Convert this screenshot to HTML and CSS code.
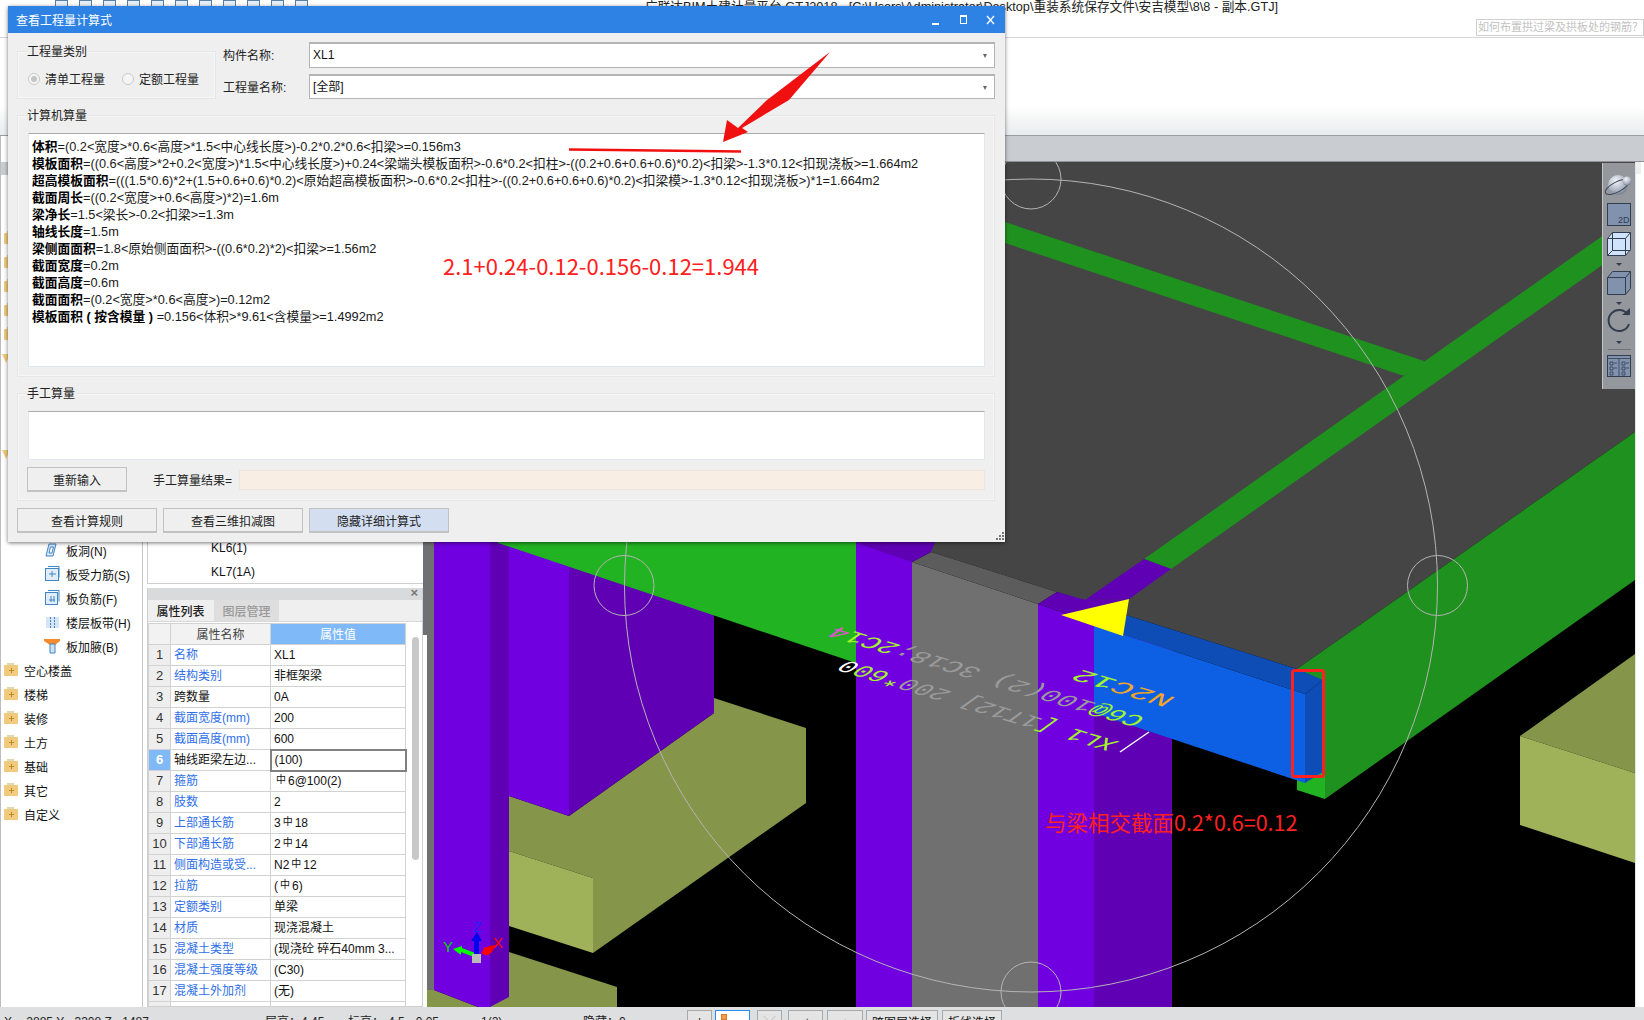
FILE: index.html
```html
<!DOCTYPE html>
<html lang="zh">
<head>
<meta charset="utf-8">
<title>查看工程量计算式</title>
<link rel="stylesheet" href="styles.css">
</head>
<body>
<header class="topbar">
  <div class="quick">
    <i class="qi"></i><i class="qi"></i><i class="qi"></i><i class="qi"></i><i class="qi"></i><i class="qi"></i><i class="qi"></i><i class="qi"></i><i class="qi"></i><i class="qi"></i><i class="qi"></i>
  </div>
  <div class="apptitle">广联达BIM土建计量平台 GTJ2018 - [C:\Users\Administrator\Desktop\重装系统保存文件\安吉模型\8\8 - 副本.GTJ]</div>
  <div class="search">如何布置拱过梁及拱板处的钢筋？</div>
</header>
<div class="ribbon"></div>
<div class="main">
  <div class="leftcol">
    <nav class="tree">
      <div class="treehead"><div class="th1"></div><div class="th2"></div></div>
      <div class="row folder"><i class="fd"></i></div>
      <div class="row folder"><i class="fd"></i></div>
      <div class="row folder"><i class="fd"></i></div>
      <div class="row folder"><i class="fd"></i></div>
      <div class="row folder"><i class="fd"></i></div>
      <div class="row folder"><i class="tri"></i></div>
      <div class="row"></div>
      <div class="row"></div>
      <div class="row"></div>
      <div class="row folder"><i class="tri"></i></div>
      <div class="row"></div>
      <div class="row"></div>
      <div class="row"></div>
      <div class="row leaf"><svg class="ic" viewBox="0 0 16 16"><path d="M5 2h7L9 14H2z" fill="#d8e6f5" stroke="#3f86c9"/><path d="M6.500 5h3L8 11H5z" fill="#fff" stroke="#3f86c9"/></svg>板洞(N)</div>
      <div class="row leaf"><svg class="ic" viewBox="0 0 16 16"><rect x="1.500" y="2.500" width="13" height="12" fill="#e2edf8" stroke="#3f86c9"/><path d="M4 0.500h11v11M5 8h7M8 5v6" fill="none" stroke="#3f86c9"/></svg>板受力筋(S)</div>
      <div class="row leaf"><svg class="ic" viewBox="0 0 16 16"><rect x="1.500" y="2.500" width="12" height="12" fill="#e2edf8" stroke="#3f86c9"/><path d="M4 0.500h11v11M5 10h6M7 6v6M10 6v6" fill="none" stroke="#3f86c9"/></svg>板负筋(F)</div>
      <div class="row leaf"><svg class="ic" viewBox="0 0 16 16"><rect x="2" y="3" width="13" height="11" fill="#d5e5f6"/><path d="M6.500 3v11M10.500 3v11" stroke="#3f86c9" stroke-dasharray="2 1"/></svg>楼层板带(H)</div>
      <div class="row leaf"><svg class="ic" viewBox="0 0 16 16"><path d="M0 1h16v2L11 7v8H6V7L0 3z" fill="#f58b2c"/><path d="M6 6h5v9H6z" fill="#cfe0f2" stroke="#3f86c9"/></svg>板加腋(B)</div>
      <div class="row folder"><i class="fd"></i>空心楼盖</div>
      <div class="row folder"><i class="fd"></i>楼梯</div>
      <div class="row folder"><i class="fd"></i>装修</div>
      <div class="row folder"><i class="fd"></i>土方</div>
      <div class="row folder"><i class="fd"></i>基础</div>
      <div class="row folder"><i class="fd"></i>其它</div>
      <div class="row folder"><i class="fd"></i>自定义</div>
    </nav>
    <div class="midcol">
      <div class="list">
        <div class="listrow">KL6(1)</div>
        <div class="listrow">KL7(1A)</div>
      </div>
      <div class="props">
        <div class="propshead"><span class="closex">×</span></div>
        <div class="tabs"><div class="tab on">属性列表</div><div class="tab">图层管理</div></div>
        <div class="tablewrap">
          <table class="ptable">
            <colgroup><col class="c1"><col class="c2"><col class="c3"></colgroup>
            <tr class="hd"><th></th><th>属性名称</th><th class="val">属性值</th></tr>
            <tr><td class="n">1</td><td class="b">名称</td><td>XL1</td></tr>
            <tr><td class="n">2</td><td class="b">结构类别</td><td>非框架梁</td></tr>
            <tr><td class="n">3</td><td>跨数量</td><td>0A</td></tr>
            <tr><td class="n">4</td><td class="b">截面宽度(mm)</td><td>200</td></tr>
            <tr><td class="n">5</td><td class="b">截面高度(mm)</td><td>600</td></tr>
            <tr><td class="n act">6</td><td>轴线距梁左边...</td><td class="edit">(100)</td></tr>
            <tr><td class="n">7</td><td class="b">箍筋</td><td><span class="rb">中</span>6@100(2)</td></tr>
            <tr><td class="n">8</td><td class="b">肢数</td><td>2</td></tr>
            <tr><td class="n">9</td><td class="b">上部通长筋</td><td>3<span class="rb">中</span>18</td></tr>
            <tr><td class="n">10</td><td class="b">下部通长筋</td><td>2<span class="rb">中</span>14</td></tr>
            <tr><td class="n">11</td><td class="b">侧面构造或受...</td><td>N2<span class="rb">中</span>12</td></tr>
            <tr><td class="n">12</td><td class="b">拉筋</td><td>(<span class="rb">中</span>6)</td></tr>
            <tr><td class="n">13</td><td class="b">定额类别</td><td>单梁</td></tr>
            <tr><td class="n">14</td><td class="b">材质</td><td>现浇混凝土</td></tr>
            <tr><td class="n">15</td><td class="b">混凝土类型</td><td>(现浇砼 碎石40mm 3...</td></tr>
            <tr><td class="n">16</td><td class="b">混凝土强度等级</td><td>(C30)</td></tr>
            <tr><td class="n">17</td><td class="b">混凝土外加剂</td><td>(无)</td></tr>
            <tr><td class="n"></td><td></td><td></td></tr>
          </table>
          <div class="vscroll"></div>
        </div>
      </div>
    </div>
    <div class="splitter"></div>
  </div>
  <div class="rightcol">
    <div class="tabstrip"></div>
    <div class="canvasrow">
      <div class="viewport">
        <svg class="scene" width="1208" height="845" viewBox="427 162 1208 845">
          <rect x="427" y="162" width="1208" height="845" fill="#000"/>
          <polygon points="427,162 1635,162 1635,432 1297,669 1126,615 1057,592 931,552 855,530 427,530" fill="#454545"/>
          <polygon points="1005,222 1424,361 1419,378 1401,375 1005,243" fill="#1f911f"/>
          <polygon points="1144,559 1171,569 1635,242 1635,213" fill="#1f911f"/>
          <polygon points="1297,669 1635,432 1635,580 1325,799 1325,682" fill="#1f911f"/>
          <polygon points="1297,770 1325,770 1325,799 1297,790" fill="#22b322"/>
          <polygon points="1520,736 1635,654 1635,773" fill="#85964a"/>
          <polygon points="1520,736 1635,773 1635,863 1520,825" fill="#9fb25a"/>
          <polygon points="509,952 617,987 617,1007 490,1007" fill="#85964a"/>
          <polygon points="427,990 434,990 478,1007 427,1007" fill="#85964a"/>
          <polygon points="509,796 509,851 593,878 593,953 806,803 806,728 714,698 714,713 569,816" fill="#85964a"/>
          <polygon points="509,851 593,878 593,953 509,926" fill="#9fb25a"/>
          <rect x="427" y="500" width="7" height="490" fill="#707070"/>
          <polygon points="434,500 490,500 490,1007 478,1007 434,990" fill="#7000e0"/>
          <polygon points="490,500 509,500 509,997 490,1007" fill="#5f00b5"/>
          <polygon points="509,500 569,500 569,816 509,796" fill="#7000e0"/>
          <polygon points="569,500 714,500 714,713 569,816" fill="#5f00b5"/>
          <polygon points="498,543 856,543 856,663" fill="#22b322"/>
          <polygon points="498,530 856,530 856,543 498,543" fill="#22b322"/>
          <rect x="856" y="543" width="56" height="464" fill="#7000e0"/>
          <polygon points="912,562 1038,604 1038,1007 912,1007" fill="#707070"/>
          <polygon points="912,562 931,552 1057,592 1038,604" fill="#5c5c5c"/>
          <polygon points="856,530 940,530 931,552 912,562 856,543" fill="#5f00b5"/>
          <polygon points="1038,604 1094,623 1094,1007 1038,1007" fill="#7000e0"/>
          <polygon points="1094,623 1172,640 1172,1007 1094,1007" fill="#5f00b5"/>
          <polygon points="1144,559 1171,569 1129,599 1085,600" fill="#5f00b5"/>
          <polygon points="1038,604 1057,592 1086,600 1129,599 1094,623" fill="#5f00b5"/>
          <polygon points="1094,625 1305,694 1305,783 1094,713" fill="#0d60e4"/>
          <polygon points="1126,615 1297,669 1323,680 1305,694 1100,627" fill="#0e4db5"/>
          <polygon points="1305,694 1323,680 1323,772 1305,783" fill="#0e4db5"/>
          <polygon points="1061,615 1129,599 1123,636" fill="#ff0"/>
          <text class="bmt" transform="matrix(-1.58 -0.474 1.2 -0.87 1120 742)"><tspan fill="#a4f52c">XL1 [</tspan><tspan fill="#9a9a9a">1T12] 200</tspan><tspan fill="#a4f52c">*60</tspan><tspan fill="#fff">0</tspan></text>
          <text class="bmt" transform="matrix(-1.70 -0.504 1.2 -0.87 1147 718)"><tspan fill="#a4f52c">C6@</tspan><tspan fill="#9a9a9a">100(2) 3C18;</tspan><tspan fill="#a4f52c">2C1</tspan><tspan fill="#dd55cc">4</tspan></text>
          <text class="bmt" transform="matrix(-2.0 -0.6 1.2 -0.87 1177 698)"><tspan fill="#f5a623">N2C</tspan><tspan fill="#a4f52c">12</tspan></text>
          <line x1="1120" y1="752" x2="1149" y2="732" stroke="#fff" stroke-width="1.500"/>
          <circle cx="1031" cy="585.500" r="406.500" fill="none" stroke="#b4b4b4"/>
          <circle cx="1031" cy="179" r="30" fill="none" stroke="#b4b4b4"/>
          <circle cx="1437.500" cy="585.500" r="30" fill="none" stroke="#b4b4b4"/>
          <circle cx="624" cy="585.500" r="30" fill="none" stroke="#b4b4b4"/>
          <circle cx="1031" cy="992" r="30" fill="none" stroke="#b4b4b4"/>
          <rect x="1292.500" y="670.500" width="31" height="106" rx="2" fill="none" stroke="#ff2020" stroke-width="3"/>
          <text class="note" x="1045" y="831">与梁相交截面0.2*0.6=0.12</text>
          <g class="axes">
            <path d="M453 949l9 -3 0 2 13 5 -1 4 -13 -5 0 3z" fill="#0f0"/>
            <path d="M481 953l8 -7 7 -1 -4 7 -7 3z" fill="#e00"/>
            <circle cx="487" cy="951" r="4" fill="#f00"/>
            <path d="M477 932l5 9h-3v14h-5v-14h-3z" fill="#00e"/>
            <rect x="472" y="954" width="9" height="9" fill="#bbb"/>
            <text x="473" y="932" fill="#22f">Z</text>
            <text x="443" y="952" fill="#0d0">Y</text>
            <text x="493" y="948" fill="#f00">X</text>
          </g>
        </svg>
        <aside class="viewtools">
          <svg width="33" height="226" viewBox="0 0 33 226">
            <defs><radialGradient id="gl" cx="0.400" cy="0.300" r="0.800"><stop offset="0" stop-color="#f4f6f9"/><stop offset="0.600" stop-color="#aab3c2"/><stop offset="1" stop-color="#5f6a7c"/></radialGradient></defs>
            <circle cx="15" cy="22" r="10" fill="url(#gl)"/>
            <ellipse cx="14" cy="24" rx="13" ry="5" fill="none" stroke="#3c4656" transform="rotate(-28 14 24)"/>
            <circle cx="24" cy="18" r="4.500" fill="url(#gl)"/>
            <rect x="4.500" y="40.500" width="23" height="22" fill="#8092ad" stroke="#333d50"/>
            <text class="t2d" x="15" y="60">2D</text>
            <path d="M4.500 75.500l5-6h18v17l-5 6h-18z" fill="#cfe3fb" stroke="#333d50"/>
            <path d="M4.500 75.500h18v17M22.500 75.500l5-6M4.500 92.500l5-5h18M9.500 69.500v18" fill="none" stroke="#333d50"/>
            <path d="M13 100h6l-3 3z" fill="#333d50"/>
            <path d="M4.500 114.500l5-6h18v17l-5 6h-18z" fill="#8092ad" stroke="#333d50"/>
            <path d="M4.500 114.500h18v17M22.500 114.500l5-6" fill="none" stroke="#333d50"/>
            <path d="M13 139h6l-3 3z" fill="#333d50"/>
            <path d="M25 152a10.500 10.500 0 1 0 1 9" fill="none" stroke="#333d50" stroke-width="2"/>
            <path d="M19 152h8v-7z" fill="#333d50"/>
            <path d="M13 178h6l-3 3z" fill="#333d50"/>
            <path d="M5 186.500h23" stroke="#70747a"/>
            <rect x="4.500" y="192.500" width="23" height="21" fill="#8092ad" stroke="#333d50"/>
            <path d="M4.500 195.500h23M16 196v17M7 199h3v3h-3zM7 204h3v3h-3zM7 209h3v3h-3zM19 199h3v3h-3zM19 204h3v3h-3zM19 209h3v3h-3zM11 200h3M11 205h3M23 200h3M23 205h3" fill="none" stroke="#333d50" stroke-width="0.800"/>
          </svg>
        </aside>
      </div>
      <div class="rightstrip"><div class="rs1"></div></div>
    </div>
  </div>
</div>
<footer class="status">
  <span class="st st1">X= -2885 Y= 3308 Z= 1487</span>
  <span class="st st2">层高：4.45</span>
  <span class="st st3">标高：-4.5~-0.05</span>
  <span class="st st4">1(2)</span>
  <span class="st st5">隐藏：0</span>
  <span class="sb s1">|</span>
  <span class="sb s2 sel"><i class="sq"></i></span>
  <span class="sb s3 dim">╳</span>
  <span class="sb s4">∕</span>
  <span class="sb s5">+</span>
  <span class="sb s6">跨图层选择</span>
  <span class="sb s7">折线选择</span>
</footer>

<section class="dialog">
  <div class="dtitle">
    <span class="dtext">查看工程量计算式</span>
    <svg class="wctl" width="70" height="14" viewBox="0 0 70 14">
      <path d="M0 11h7" stroke="#fff" stroke-width="2"/>
      <rect x="28.500" y="2.500" width="6" height="8" fill="none" stroke="#fff"/>
      <path d="M28 3h7" stroke="#fff" stroke-width="2"/>
      <path d="M55 3l7 8M62 3l-7 8" stroke="#fff" stroke-width="1.300"/>
    </svg>
  </div>
  <div class="dbody">
    <div class="toprow">
      <div class="group g1">
        <div class="legend">工程量类别</div>
        <div class="radios">
          <i class="radio on"></i><span class="rl">清单工程量</span>
          <i class="radio"></i><span class="rl">定额工程量</span>
        </div>
      </div>
      <div class="fields">
        <div class="field"><label class="flabel">构件名称:</label><div class="combo">XL1<i class="caret"></i></div></div>
        <div class="field"><label class="flabel">工程量名称:</label><div class="combo">[全部]<i class="caret"></i></div></div>
      </div>
    </div>
    <div class="group g2">
      <div class="legend">计算机算量</div>
      <div class="area calc">
        <div class="ln"><b>体积</b>=(0.2&lt;宽度&gt;*0.6&lt;高度&gt;*1.5&lt;中心线长度&gt;)-0.2*0.2*0.6&lt;扣梁&gt;=0.156m3</div>
        <div class="ln"><b>模板面积</b>=((0.6&lt;高度&gt;*2+0.2&lt;宽度&gt;)*1.5&lt;中心线长度&gt;)+0.24&lt;梁端头模板面积&gt;-0.6*0.2&lt;扣柱&gt;-((0.2+0.6+0.6+0.6)*0.2)&lt;扣梁&gt;-1.3*0.12&lt;扣现浇板&gt;=1.664m2</div>
        <div class="ln"><b>超高模板面积</b>=(((1.5*0.6)*2+(1.5+0.6+0.6)*0.2)&lt;原始超高模板面积&gt;-0.6*0.2&lt;扣柱&gt;-((0.2+0.6+0.6+0.6)*0.2)&lt;扣梁模&gt;-1.3*0.12&lt;扣现浇板&gt;)*1=1.664m2</div>
        <div class="ln"><b>截面周长</b>=((0.2&lt;宽度&gt;+0.6&lt;高度&gt;)*2)=1.6m</div>
        <div class="ln"><b>梁净长</b>=1.5&lt;梁长&gt;-0.2&lt;扣梁&gt;=1.3m</div>
        <div class="ln"><b>轴线长度</b>=1.5m</div>
        <div class="ln"><b>梁侧面面积</b>=1.8&lt;原始侧面面积&gt;-((0.6*0.2)*2)&lt;扣梁&gt;=1.56m2</div>
        <div class="ln"><b>截面宽度</b>=0.2m</div>
        <div class="ln"><b>截面高度</b>=0.6m</div>
        <div class="ln"><b>截面面积</b>=(0.2&lt;宽度&gt;*0.6&lt;高度&gt;)=0.12m2</div>
        <div class="ln"><b>模板面积 ( 按含模量 ) </b>=0.156&lt;体积&gt;*9.61&lt;含模量&gt;=1.4992m2</div>
        <div class="redcalc">2.1+0.24-0.12-0.156-0.12=1.944</div>
      </div>
    </div>
    <div class="group g3">
      <div class="legend">手工算量</div>
      <div class="area manual"></div>
      <div class="manrow">
        <button class="btn reinput">重新输入</button>
        <span class="mlabel">手工算量结果=</span>
        <div class="result"></div>
      </div>
    </div>
    <div class="btnrow">
      <button class="btn big">查看计算规则</button>
      <button class="btn big">查看三维扣减图</button>
      <button class="btn big blue">隐藏详细计算式</button>
    </div>
  </div>
  <svg class="grip" width="9" height="9" viewBox="0 0 9 9"><path d="M7 0h2v2H7zM4 3h2v2H4zM7 3h2v2H7zM1 6h2v2H1zM4 6h2v2H4zM7 6h2v2H7z" fill="#777"/></svg>
  <svg class="marks" width="997" height="160" viewBox="8 6 997 160">
    <polygon points="830,52 767,100 738,128 727,120 723,142 748,132 742,128 789,100" fill="#f01010"/>
    <path d="M569 149.500L614 150 741 151.500" stroke="#f01010" stroke-width="2.500" fill="none"/>
  </svg>
</section>
</body>
</html>
```

FILE: styles.css
```css
* { box-sizing: border-box; }
html, body { margin: 0; padding: 0; }
body {
  width: 1644px; height: 1020px; overflow: hidden; position: relative;
  display: flex; flex-direction: column; background: #fff;
  font-family: "Liberation Sans", "Noto Sans CJK SC", sans-serif; font-size: 12px; color: #111;
}
/* top */
.topbar { height: 38px; flex: none; display: flex; position: relative; border-bottom: 1px solid #d6d6d6; overflow: hidden; background: #fff; }
.quick { display: flex; gap: 11px; padding-left: 55px; width: 645px; flex: none; }
.qi { width: 13px; height: 14px; border: 1px solid #5b7fa8; background: #e8eff7; }
.apptitle { font-size: 12.700px; line-height: 14px; white-space: nowrap; flex: 1; color: #222; }
.search { position: absolute; left: 1476px; top: 19px; width: 168px; height: 17px; border: 1px solid #cfcfcf; color: #c2c2c2; font-size: 11px; line-height: 15px; padding-left: 1px; white-space: nowrap; overflow: hidden; }
.ribbon { height: 98px; flex: none; background: linear-gradient(#fff 0, #fff 70%, #e8ecec 100%); border-bottom: 1px solid #9a9ea2; }
/* main */
.main { flex: 1; min-height: 0; display: flex; }
.leftcol { width: 427px; flex: none; display: flex; background: #fff; }
.tree { width: 143px; flex: none; border-left: 1px solid #bdbdbd; border-right: 1px solid #c6c6c6; margin-right: 4px; }
.treehead { height: 62px; margin-bottom: 28px; }
.th1 { height: 26px; background: #fff; }
.th2 { height: 13px; background: #c9ccd1; }
.row { height: 24px; display: flex; align-items: center; white-space: nowrap; }
.folder { padding-left: 3px; }
.leaf { padding-left: 43px; }
.fd { width: 14px; height: 11px; background: #f0cb7d; margin-right: 6px; position: relative; border-radius: 1px; }
.fd::before { content: ""; position: absolute; left: 3px; top: -2px; width: 7px; height: 2px; background: #e6d6b0; }
.fd::after { content: ""; position: absolute; left: 5px; top: 3px; width: 5px; height: 5px; background: linear-gradient(#b98a2c, #b98a2c) center/5px 1px no-repeat, linear-gradient(#b98a2c, #b98a2c) center/1px 5px no-repeat; }
.tri { width: 0; height: 0; border-top: 9px solid #f0cb7d; border-left: 4px solid transparent; border-right: 4px solid transparent; margin-left: -2px; }
.ic { width: 16px; height: 16px; margin-right: 6px; flex: none; }
.midcol { width: 276px; flex: none; display: flex; flex-direction: column; }
.list { flex: 1; display: flex; flex-direction: column; justify-content: flex-end; border-bottom: 1px solid #cfcfcf; border-left: 1px solid #cfcfcf; }
.listrow { height: 24px; line-height: 26px; padding-left: 63px; }
.props { height: 419px; margin-top: 4px; flex: none; display: flex; flex-direction: column; border-left: 1px solid #cfcfcf; border-right: 1px solid #cfcfcf; border-bottom: 1px solid #cfcfcf; overflow: hidden; }
.propshead { height: 12px; background: #d9dadc; flex: none; position: relative; }
.closex { position: absolute; right: 4px; top: -2px; font-size: 13px; line-height: 14px; color: #777; font-weight: 700; }
.tabs { height: 22px; flex: none; display: flex; background: #efefef; border-bottom: 1px solid #d8d8d8; }
.tab { width: 65px; text-align: center; line-height: 24px; font-size: 12px; color: #9a9a9a; background: #dedede; font-weight: 500; }
.tab.on { color: #222; background: #efefef; margin-right: 1px; }
.tablewrap { flex: 1; position: relative; overflow: hidden; padding-top: 1px; }
.ptable { border-collapse: collapse; table-layout: fixed; width: 257px; }
.c1 { width: 22px; } .c2 { width: 100px; } .c3 { width: 135px; }
.ptable td, .ptable th { height: 21px; border: 1px solid #d2d2d2; padding: 0 3px; font-weight: 400; white-space: nowrap; overflow: hidden; line-height: 18px; text-align: left; font-size: 12px; }
.ptable .hd th { height: 21px; padding-top: 1px; background: #f2f2f2; text-align: center; color: #444; }
.ptable .hd th.val { background: #7fb9f8; color: #fff; }
.ptable .n { background: #eeeeee; text-align: center; padding: 0; font-size: 13px; color: #333; }
.ptable .n.act { background: #7fb9f8; color: #fff; font-weight: 700; }
.ptable .b { color: #2f6fe8; }
.ptable .edit { border: 2px solid #808080; }
.rb { font-size: 10px; position: relative; top: -2px; margin: 0 2px; }
.vscroll { position: absolute; left: 264px; top: 15px; width: 7px; height: 223px; background: #c8c8c8; border-radius: 4px; }
.splitter { width: 4px; flex: none; background: linear-gradient(#6f7075 0, #6f7075 499px, #fff 499px); }
.rightcol { flex: 1; min-width: 0; display: flex; flex-direction: column; }
.tabstrip { height: 26px; flex: none; background: #c9ccd1; border-bottom: 1px solid #8f9296; }
.canvasrow { flex: 1; display: flex; min-height: 0; }
.viewport { width: 1208px; height: 845px; flex: none; position: relative; overflow: hidden; }
.scene { display: block; }
.bmt { font-family: "Liberation Mono", monospace; font-size: 16px; }
.note { font-family: "Noto Sans CJK SC", sans-serif; font-size: 21.500px; fill: #ff2020; }
.axes text { font-family: "Liberation Sans", sans-serif; font-size: 15px; }
.viewtools { position: absolute; right: 0; top: 1px; width: 33px; height: 226px; background: #94979c; border-left: 1px solid #c4c6c9; }
.t2d { font-family: "Liberation Sans", sans-serif; font-size: 9px; fill: #333d50; }
.rightstrip { flex: 1; background: #fff; border-left: 1px solid #e4e4e4; position: relative; }
.rs1 { width: 5px; height: 12px; background: #eee; }
/* status */
.status { height: 13px; flex: none; background: #dedfe1; display: flex; align-items: flex-start; overflow: hidden; position: relative; }
.st { margin-top: 8px; line-height: 14px; white-space: nowrap; font-size: 12px; color: #222; }
.st1 { width: 265px; padding-left: 4px; flex: none; }
.st2 { width: 83px; flex: none; }
.st3 { width: 133px; flex: none; }
.st4 { width: 102px; flex: none; }
.st5 { width: 104px; flex: none; }
.sb { height: 30px; margin-top: 3px; margin-right: 3px; border: 1px solid #a9a9a9; background: #e4e4e4; text-align: center; line-height: 24px; flex: none; font-size: 12px; }
.s1 { width: 25px; } .s2 { width: 35px; margin-right: 7px; } .s3 { width: 25px; margin-right: 6px; } .s4 { width: 35px; margin-right: 4px; } .s5 { width: 36px; }
.s6 { width: 72px; margin-right: 4px; } .s7 { width: 60px; }
.sel { background: #fff; border: 1px solid #2a8cf0; position: relative; }
.sq { position: absolute; left: 5px; top: 3px; width: 6px; height: 6px; background: #f79a4b; border: 1px solid #d87a2c; }
.dim { color: #aaa; }
/* dialog */
.dialog { position: absolute; left: 8px; top: 6px; width: 997px; height: 536px; background: #efefef; box-shadow: 0 1px 4px rgba(0,0,0,.55); display: flex; flex-direction: column; }
.dtitle { height: 27px; flex: none; background: #2d82e3; color: #fff; display: flex; align-items: center; justify-content: space-between; padding: 0 3px 0 8px; }
.dtext { font-size: 12px; }
.dbody { flex: 1; padding: 9px 10px 9px 9px; display: flex; flex-direction: column; }
.toprow { display: flex; height: 57px; flex: none; }
.group { border: 1px solid #e6e6e6; box-shadow: inset 0 0 0 1px #f6f6f6; }
.legend { background: #efefef; width: max-content; margin: -8px 0 0 9px; padding: 0 1px 0 0; height: 16px; line-height: 16px; color: #222; }
.g1 { width: 199px; height: 48px; margin-top: 9px; flex: none; }
.radios { display: flex; align-items: center; padding: 10px 0 0 10px; }
.radio { width: 12px; height: 12px; border-radius: 50%; border: 1px solid #c9c9c9; background: #f4f6f4; margin-right: 4px; flex: none; position: relative; }
.radio.on::after { content: ""; position: absolute; left: 2px; top: 2px; width: 6px; height: 6px; border-radius: 50%; background: #c4c4c4; }
.rl { width: 76px; flex: none; margin-right: 1px; color: #222; white-space: nowrap; margin-left: 1px; }
.fields { flex: 1; display: flex; flex-direction: column; gap: 6px; padding-left: 7px; }
.field { display: flex; align-items: center; height: 25.500px; }
.flabel { width: 86px; flex: none; color: #222; }
.combo { flex: 1; height: 100%; background: #fff; border: 1px solid #b4b4b4; border-top-width: 2px; line-height: 23px; padding-left: 3px; position: relative; color: #111; }
.caret { position: absolute; right: 7px; top: 10px; width: 0; height: 0; border-top: 4px solid #666; border-left: 2.500px solid transparent; border-right: 2.500px solid transparent; }
.g2 { height: 262px; margin-top: 16px; flex: none; padding: 0 9px 9px 10px; }
.g2 .legend, .g3 .legend { margin-left: -1px; }
.area { background: #fff; border: 1px solid #e2e7ef; border-top: 1px solid #ababab; }
.calc { height: 234px; margin-top: 9px; padding: 4px 0 0 3px; position: relative; }
.ln { height: 17px; line-height: 17px; white-space: pre; color: #1a1a1a; font-size: 12.750px; }
.ln b { font-weight: 700; color: #000; }
.redcalc { position: absolute; left: 414px; top: 117px; color: #ff2020; font-size: 22px; line-height: 28px; white-space: nowrap; font-family: "Noto Sans CJK SC", sans-serif; }
.g3 { height: 108px; margin-top: 16px; flex: none; padding: 0 9px 0 10px; }
.manual { height: 49px; margin-top: 9px; }
.manrow { display: flex; align-items: center; margin-top: 7px; }
.btn { font-family: inherit; font-size: 12px; color: #222; background: #efefef; border: 1px solid #c2c2c2; border-width: 1px 1px 2px 1px; padding: 0; }
.reinput { width: 100px; height: 25px; flex: none; margin-left: -1px; }
.mlabel { margin-left: 26px; width: 86px; flex: none; color: #222; white-space: nowrap; }
.result { flex: 1; height: 20px; background: #f8eee4; border: 1px solid #ebe6e0; }
.btnrow { display: flex; gap: 6px; margin-top: 7px; flex: none; }
.big { width: 140px; height: 25px; }
.blue { background: #d3dff0; }
.grip { position: absolute; right: 1px; bottom: 1px; }
.marks { position: absolute; left: 0; top: 0; pointer-events: none; }
```
